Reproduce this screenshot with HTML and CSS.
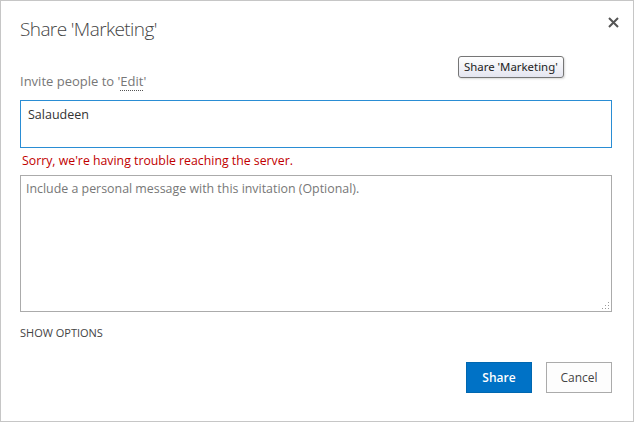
FILE: index.html
```html
<!DOCTYPE html>
<html lang="en">
<head>
    <meta charset="UTF-8">
    <title>Share 'Marketing'</title>
    <link rel="stylesheet" href="styles.css">
</head>
<body>
    <div class="dialog">
        <div class="dialog-header">
            <h1 class="dialog-title">Share 'Marketing'</h1>
            <button type="button" class="close-btn" title="Close">
                <svg width="11" height="11" viewBox="0 0 11 11">
                    <path d="M1 1 L10 10 M10 1 L1 10" stroke="#555" stroke-width="2" fill="none"/>
                </svg>
            </button>
        </div>

        <div class="invite-label">Invite people to '<span class="perm">Edit</span>'</div>

        <div class="people-picker">Salaudeen</div>
        <p class="error">Sorry, we're having trouble reaching the server.</p>

        <div class="message-wrap">
            <textarea class="message" placeholder="Include a personal message with this invitation (Optional)."></textarea>
            <!-- resize grip -->
            <svg class="grip" width="7" height="7" viewBox="0 0 7 7">
                <g fill="#9a9a9a">
                    <rect x="6" y="0" width="1" height="1"/>
                    <rect x="3" y="3" width="1" height="1"/>
                    <rect x="6" y="3" width="1" height="1"/>
                    <rect x="0" y="6" width="1" height="1"/>
                    <rect x="3" y="6" width="1" height="1"/>
                    <rect x="6" y="6" width="1" height="1"/>
                </g>
            </svg>
        </div>

        <a class="show-options" href="#">SHOW OPTIONS</a>

        <div class="buttons">
            <button type="button" class="btn btn-primary">Share</button>
            <button type="button" class="btn">Cancel</button>
        </div>

        <!-- tooltip from hovering the title -->
        <div class="tooltip">Share 'Marketing'</div>
    </div>
</body>
</html>
```

FILE: styles.css
```css
body {
    margin: 0;
    background: #fff;
    font-family: "Open Sans", "Noto Sans", sans-serif;
    color: #444;
}
.dialog {
    position: relative;
    box-sizing: border-box;
    width: 634px;
    height: 422px;
    border: 1px solid #c6c6c6;
    padding: 0 21px 0 19px;
    background: #fff;
}
.dialog-header {
    display: flex;
    justify-content: space-between;
    align-items: flex-start;
    padding-top: 14px;
}
.dialog-title {
    margin: 0;
    font-size: 19px;
    font-weight: 300;
    letter-spacing: -0.6px;
    line-height: 28px;
    color: #444;
}
.close-btn {
    margin: 2px -7px 0 0;
    padding: 0;
    border: none;
    background: none;
    width: 11px;
    height: 11px;
    cursor: pointer;
}
.close-btn svg {
    display: block;
}
.invite-label {
    margin-top: 29px;
    font-size: 13px;
    line-height: 18px;
    color: #777;
}
.perm {
    border-bottom: 1px dotted #555;
}
.people-picker {
    box-sizing: border-box;
    margin-top: 10px;
    height: 48px;
    border: 1px solid #2a8dd4;
    padding: 5px 7px;
    font-size: 12.5px;
    line-height: 18px;
    color: #333;
}
.error {
    margin: 4px 0 0 2px;
    font-size: 12.3px;
    line-height: 18px;
    color: #bf0000;
}
.message-wrap {
    position: relative;
    margin-top: 5px;
}
.message {
    display: block;
    box-sizing: border-box;
    width: 100%;
    height: 137px;
    border: 1px solid #ababab;
    padding: 4px 5px;
    font-family: inherit;
    font-size: 12.4px;
    line-height: 18px;
    color: #333;
    resize: none;
}
.message::placeholder {
    color: #777;
}
.grip {
    position: absolute;
    right: 3px;
    bottom: 3px;
}
.show-options {
    display: inline-block;
    margin-top: 13px;
    font-size: 11px;
    line-height: 16px;
    color: #444;
    text-decoration: none;
}
.buttons {
    display: flex;
    justify-content: flex-end;
    gap: 14px;
    margin-top: 20px;
}
.btn {
    box-sizing: border-box;
    width: 66px;
    height: 31px;
    border: 1px solid #ababab;
    background: #fdfdfd;
    font-family: inherit;
    font-size: 12px;
    color: #444;
    cursor: pointer;
}
.btn-primary {
    background: #0072c6;
    border-color: #0067b0;
    color: #fff;
    font-weight: 600;
}
.tooltip {
    position: absolute;
    left: 457px;
    top: 55px;
    padding: 2px 5px;
    border: 1px solid #767676;
    border-radius: 3px;
    background: linear-gradient(#fff, #e4e5f0);
    font-family: "Noto Sans", "Open Sans", sans-serif;
    font-size: 11.4px;
    line-height: 16px;
    color: #222;
    box-shadow: 1px 1px 2px rgba(0, 0, 0, 0.15);
}
```
